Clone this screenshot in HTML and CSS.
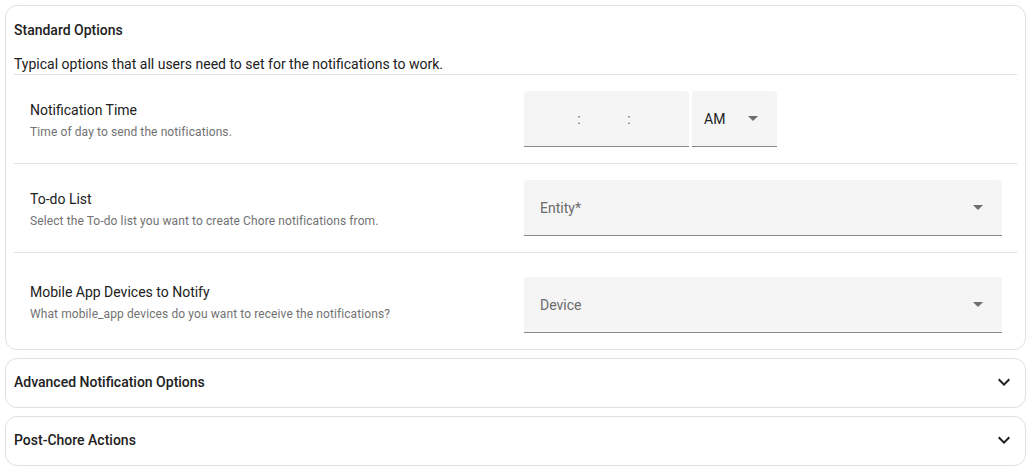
FILE: index.html
```html
<!DOCTYPE html>
<html lang="en">
<head>
<meta charset="utf-8">
<title>Chore Notifications</title>
<link rel="stylesheet" href="styles.css">
</head>
<body>
<div class="page">
  <section class="card">
    <div class="card-header main">Standard Options</div>
    <div class="card-desc">Typical options that all users need to set for the notifications to work.</div>
    <div class="rows">
      <div class="row">
        <div class="info">
          <div class="label">Notification Time</div>
          <div class="desc">Time of day to send the notifications.</div>
        </div>
        <div class="control">
          <div class="time-group">
            <div class="field time-field">
              <span class="seg"></span><span class="colon">:</span><span class="seg"></span><span class="colon">:</span><span class="seg"></span>
            </div>
            <div class="field ampm">
              <span class="value">AM</span>
              <svg class="arrow" viewBox="7 10 10 5" width="10" height="5"><polygon points="7 10 12 15 17 10" fill="currentColor"/></svg>
            </div>
          </div>
        </div>
      </div>
      <div class="row">
        <div class="info">
          <div class="label">To-do List</div>
          <div class="desc">Select the To-do list you want to create Chore notifications from.</div>
        </div>
        <div class="control">
          <div class="field select">
            <span class="placeholder">Entity*</span>
            <svg class="arrow" viewBox="7 10 10 5" width="10" height="5"><polygon points="7 10 12 15 17 10" fill="currentColor"/></svg>
          </div>
        </div>
      </div>
      <div class="row last">
        <div class="info">
          <div class="label">Mobile App Devices to Notify</div>
          <div class="desc">What mobile_app devices do you want to receive the notifications?</div>
        </div>
        <div class="control device">
          <div class="field select">
            <span class="placeholder">Device</span>
            <svg class="arrow" viewBox="7 10 10 5" width="10" height="5"><polygon points="7 10 12 15 17 10" fill="currentColor"/></svg>
          </div>
        </div>
      </div>
    </div>
  </section>

  <section class="card collapsed">
    <div class="card-header">
      <span>Advanced Notification Options</span>
      <svg class="chevron" viewBox="0 0 24 24" width="24" height="24"><path d="M7.41,8.58L12,13.17L16.59,8.58L18,10L12,16L6,10L7.41,8.58Z" fill="currentColor"/></svg>
    </div>
  </section>

  <section class="card collapsed">
    <div class="card-header">
      <span>Post-Chore Actions</span>
      <svg class="chevron" viewBox="0 0 24 24" width="24" height="24"><path d="M7.41,8.58L12,13.17L16.59,8.58L18,10L12,16L6,10L7.41,8.58Z" fill="currentColor"/></svg>
    </div>
  </section>
</div>
</body>
</html>
```
FILE: styles.css
```css
* { box-sizing: border-box; }

body {
  margin: 0;
  background: #ffffff;
  font-family: Roboto, "Noto Sans", "Liberation Sans", sans-serif;
  color: #212121;
}

.page {
  display: flex;
  flex-direction: column;
  gap: 8px;
  padding: 5px 7px 5px 5px;
}

.card {
  border: 1px solid #e0e0e0;
  border-radius: 12px;
  padding: 0 8px;
  background: #fff;
}

.card-header {
  height: 48px;
  padding-bottom: 2px;
  display: flex;
  align-items: center;
  justify-content: space-between;
  font-size: 14px;
  font-weight: 500;
  color: #212121;
}

.card-header.main { padding-bottom: 0; }

.chevron {
  color: #212121;
  margin-right: 1px;
}

.card-desc {
  font-size: 14px;
  line-height: 20px;
  color: #212121;
  border-bottom: 1px solid #e0e0e0;
}

.row {
  display: flex;
  align-items: center;
  padding: 16px 15px 16px 16px;
  border-bottom: 1px solid #e0e0e0;
}

.row.last { border-bottom: none; }

.info {
  flex: 1;
  min-width: 0;
  padding-top: 4px;
}

.label {
  font-size: 14px;
  line-height: 20px;
  color: #212121;
}

.desc {
  font-size: 12px;
  line-height: 20px;
  letter-spacing: 0.1px;
  color: #727272;
  margin-top: 2px;
}

.control {
  width: 478px;
  flex: none;
}

.control.device { padding-top: 8px; }

.field {
  height: 56px;
  background: #f5f5f5;
  border-bottom: 1px solid #8a8a8a;
  border-radius: 4px 4px 0 0;
  display: flex;
  align-items: center;
}

.time-group {
  display: flex;
  gap: 3px;
}

.time-field {
  width: 165px;
  padding-left: 10px;
}

.seg {
  width: 40px;
}

.colon {
  font-size: 14px;
  color: #6b6b6b;
  width: 10px;
  text-align: center;
}

.ampm {
  width: 85px;
  padding: 0 12px;
  justify-content: space-between;
}

.ampm .value {
  font-size: 14px;
  color: #212121;
}

.arrow {
  color: #6e6e6e;
  flex: none;
}

.ampm .arrow { margin-right: 7px; }

.select {
  padding: 0 19px 0 16px;
  justify-content: space-between;
}

.placeholder {
  font-size: 14px;
  color: #6b6b6b;
}
```
